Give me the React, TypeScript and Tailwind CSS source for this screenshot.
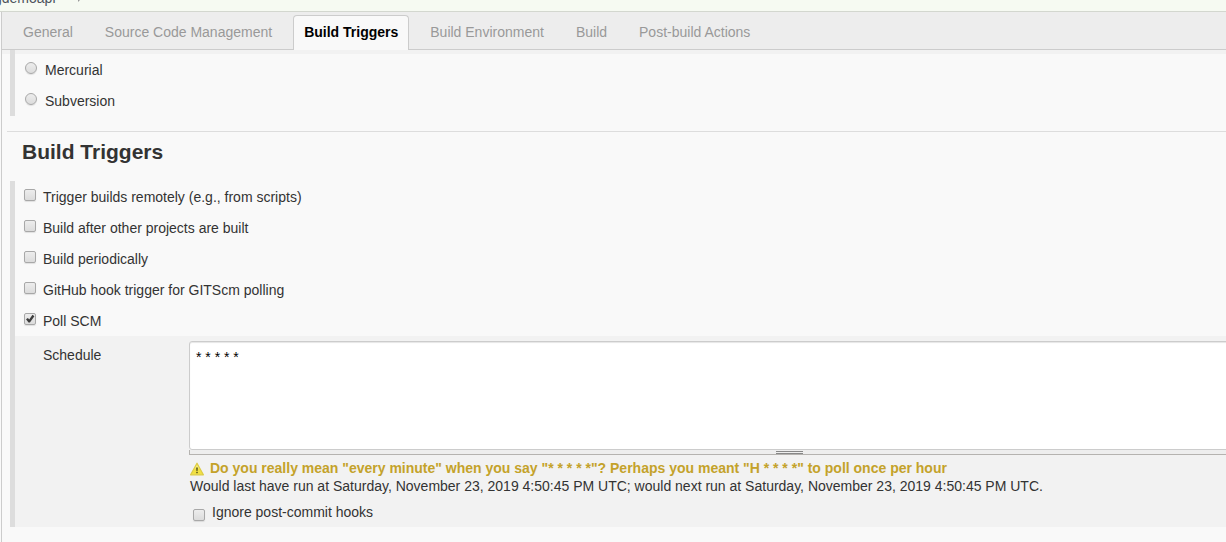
import { useState } from "react";

const tabs = ["General", "Source Code Management", "Build Triggers", "Build Environment", "Build", "Post-build Actions"];

const repositories = ["Mercurial", "Subversion"];

const triggers = [
  "Trigger builds remotely (e.g., from scripts)",
  "Build after other projects are built",
  "Build periodically",
  "GitHub hook trigger for GITScm polling",
  "Poll SCM",
];

const control =
  "peer block size-3 appearance-none border border-[#a8a8a8] bg-linear-to-b from-[#ededed] to-[#dcdcdc] shadow-[0_1px_1px_rgba(0,0,0,0.1)]";

function Checkbox({ id, checked, onChange }: { id: string; checked: boolean; onChange: () => void }) {
  return (
    <span className="relative block size-3 shrink-0">
      <input id={id} type="checkbox" checked={checked} onChange={onChange} className={control + " rounded-[2px]"} />
      <svg
        viewBox="0 0 12 12"
        className="pointer-events-none absolute inset-0 hidden size-3 peer-checked:block"
        aria-hidden="true"
      >
        <path d="M2 6.2 L3.9 4.9 L5.2 6.4 L8.5 1.8 L10.4 3.2 L5.9 9.6 L4.5 9.6 Z" fill="#3c3c3c" />
      </svg>
    </span>
  );
}

function WarningIcon() {
  return (
    <svg viewBox="0 0 16 16" className="size-4 shrink-0" aria-hidden="true">
      <path
        d="M8 3.2 L14.4 14.8 H1.6 Z"
        fill="#f1e043"
        stroke="#dccb45"
        strokeWidth="1.2"
        strokeLinejoin="round"
      />
      <path d="M8 5 L10 8.6 H6 Z" fill="#f8ef86" />
      <path d="M7.1 7.5 H8.9 L8.6 11 H7.4 Z" fill="#5f5a1c" />
      <rect x="7.2" y="11.8" width="1.6" height="1.4" fill="#5f5a1c" />
    </svg>
  );
}

export default function App() {
  const [active, setActive] = useState("Build Triggers");
  const [repository, setRepository] = useState("");
  const [enabled, setEnabled] = useState<string[]>(["Poll SCM"]);
  const [ignoreHooks, setIgnoreHooks] = useState(false);
  const [schedule, setSchedule] = useState("* * * * *");

  const toggle = (name: string) =>
    setEnabled((list) => (list.includes(name) ? list.filter((item) => item !== name) : [...list, name]));

  return (
    <div className="flex min-h-screen flex-col overflow-hidden bg-[#f9f9f9] font-['Liberation_Sans',Arial,sans-serif] text-sm leading-4 text-[#333]">
      <nav
        aria-label="Breadcrumb"
        className="flex h-3 items-end gap-[22px] overflow-hidden border-b border-[#d3d7cf] bg-[#f6faf2] pb-[5px] text-[#4d545d]"
      >
        <a href="#project" className="-ml-[6px]">
          gdemoapi
        </a>
        <svg viewBox="0 0 4 8" className="mb-1 h-2 w-1" aria-hidden="true">
          <path d="M0 0 L4 4 L0 8 Z" fill="#9a9a9a" />
        </svg>
      </nav>

      <main className="ml-px grow border-l border-[#ccc]">
        <div role="tablist" className="flex gap-[10px] border-b border-[#ccc] bg-[#ededed] px-[10px] pt-[3px]">
          {tabs.map((tab) => (
            <button
              key={tab}
              type="button"
              role="tab"
              aria-selected={tab === active}
              onClick={() => setActive(tab)}
              className={
                tab === active
                  ? "-mb-px h-[35px] rounded-t border border-b-0 border-[#ccc] bg-[#f9f9f9] px-[10px] pb-[2px] font-bold text-black"
                  : "h-[34px] border border-b-0 border-transparent px-[10px] pb-[2px] text-[#999]"
              }
            >
              {tab}
            </button>
          ))}
        </div>
        <div className="h-1 bg-[#f2f2f2]" />

        <section aria-label="Source Code Management" className="-mt-1 ml-2 border-l-5 border-[#ddd] pt-1">
          {repositories.map((name) => (
            <div key={name} className="flex h-[31px] items-start gap-2 pt-2 pl-[10px]">
              <input
                id={name}
                type="radio"
                name="repository"
                checked={repository === name}
                onChange={() => setRepository(name)}
                className={control + " shrink-0 rounded-full checked:border-4 checked:border-[#777]"}
              />
              <label htmlFor={name}>{name}</label>
            </div>
          ))}
        </section>

        <h2 className="mt-[15px] ml-[5px] border-t border-[#ddd] pt-2 pb-[17px] pl-[15px] text-[21px] leading-6 font-bold">
          Build Triggers
        </h2>

        <section aria-label="Build Triggers" className="ml-2 border-l-5 border-[#ddd]">
          {triggers.map((name) => (
            <div key={name} className="flex h-[31px] items-start gap-[7px] pt-2 pl-[9px]">
              <Checkbox id={name} checked={enabled.includes(name)} onChange={() => toggle(name)} />
              <label htmlFor={name}>{name}</label>
            </div>
          ))}

          <div className="flex bg-[#f2f2f2] pt-[5px] pb-[6px] pl-7">
            <label htmlFor="schedule" className="w-[146px] shrink-0 pt-[6px]">
              Schedule
            </label>
            <div className="-mr-[163px] grow">
              <textarea
                id="schedule"
                value={schedule}
                onChange={(event) => setSchedule(event.target.value)}
                className="block h-[109px] w-full resize-none rounded-[3px] border border-[#ccc] bg-white px-[6px] py-[7px] text-black shadow-[inset_0_1px_1px_rgba(0,0,0,0.1)] outline-none"
              />
              <div className="flex h-[5px] items-center justify-center border-b border-l border-[#b5b3b0] bg-[#eee]">
                <div className="h-[3px] w-[27px] border-y border-[#888]" />
              </div>
              <div className="flex items-center gap-[5px] pt-1 leading-[18px] font-bold text-[#c4a22a]">
                <WarningIcon />
                <p>Do you really mean "every minute" when you say "* * * * *"? Perhaps you meant "H * * * *" to poll once per hour</p>
              </div>
              <p className="pl-px leading-[18px]">
                Would last have run at Saturday, November 23, 2019 4:50:45 PM UTC; would next run at Saturday, November 23, 2019
                4:50:45 PM UTC.
              </p>
              <div className="flex items-end gap-[7px] pt-[9px] pl-1">
                <Checkbox id="ignore-hooks" checked={ignoreHooks} onChange={() => setIgnoreHooks(!ignoreHooks)} />
                <label htmlFor="ignore-hooks" className="pb-[1px]">
                  Ignore post-commit hooks
                </label>
              </div>
            </div>
          </div>
        </section>
      </main>
    </div>
  );
}
